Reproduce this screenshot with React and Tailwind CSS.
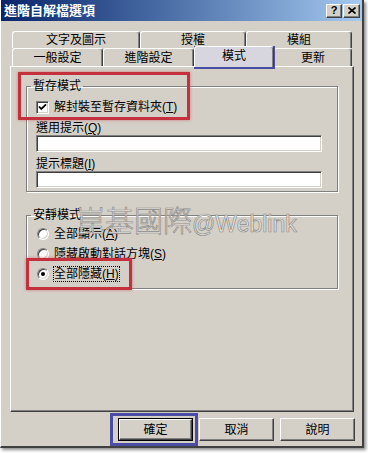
const raised =
  "bg-[#d4d0c8] border border-t-white border-l-white border-r-[#404040] border-b-[#404040] shadow-[inset_-1px_-1px_0_#808080]";
const sunken =
  "bg-white border border-t-[#808080] border-l-[#808080] border-r-white border-b-white shadow-[inset_1px_1px_0_#404040,inset_-1px_-1px_0_#d4d0c8]";

function Tab({ label, w, h, selected }) {
  return (
    <div
      className={`flex items-center justify-center rounded-t-[3px] border-t border-l border-r border-t-white border-l-white border-r-[#404040] shadow-[inset_-1px_0_0_#808080] text-[12px] leading-[14px] text-black ${
        selected ? "relative z-10 -mt-[2px] -mb-[1px] bg-[#d7d6de] pb-[3px]" : "bg-[#d4d0c8]"
      }`}
      style={{ width: w, height: h }}
    >
      {label}
    </div>
  );
}

function Radio({ checked, children, focus }) {
  return (
    <div className="flex items-center gap-[5px] pl-[1px]">
      <div className={`flex h-[12px] w-[12px] items-center justify-center rounded-full ${sunken}`}>
        {checked && <div className="h-[4px] w-[4px] rounded-full bg-black" />}
      </div>
      <span className={`text-[12px] leading-[14px] ${focus ? "outline outline-1 outline-dotted outline-black" : ""}`}>
        {children}
      </span>
    </div>
  );
}

export default function App() {
  return (
    <div className="relative h-[453px] w-[368px] overflow-hidden bg-white font-['Liberation_Sans','Noto_Sans_CJK_TC',sans-serif] text-black">
      <div className="flex h-[448px] w-[364px] flex-col border-l border-r-2 border-b-2 border-l-white border-r-[#404040] border-b-[#404040] bg-[#d4d0c8] shadow-[2px_2px_3px_rgba(0,0,0,0.45)]">
        {/* title bar */}
        <div className="flex h-[21px] items-center justify-between bg-gradient-to-r from-[#0a246a] to-[#a6caf0] pl-[3px] pr-[2px]">
          <span className="text-[13px] font-bold leading-[15px] text-white">進階自解檔選項</span>
          <div className="flex gap-[1px]">
            <div className={`flex h-[14px] w-[16px] items-center justify-center text-[11px] font-bold leading-none ${raised}`}>?</div>
            <div className={`flex h-[14px] w-[17px] items-center justify-center ${raised}`}>
              <svg width="8" height="7" viewBox="0 0 8 7">
                <path d="M0.5 0.5 L7.5 6.5 M7.5 0.5 L0.5 6.5" stroke="black" strokeWidth="1.6" />
              </svg>
            </div>
          </div>
        </div>

        {/* tabs */}
        <div className="ml-[11px] mt-[10px] flex flex-col">
          <div className="flex">
            <Tab label="文字及圖示" w={128} h={17} />
            <Tab label="授權" w={106} h={17} />
            <Tab label="模組" w={106} h={17} />
          </div>
          <div className="flex items-end">
            <Tab label="一般設定" w={91} h={18} />
            <Tab label="進階設定" w={91} h={18} />
            <Tab label="模式" w={80} h={21} selected />
            <Tab label="更新" w={78} h={18} />
          </div>
        </div>

        {/* panel */}
        <div className={`ml-[9px] flex h-[346px] w-[344px] flex-col px-[15px] ${raised}`}>
          <fieldset className="mt-[12px] border border-[#808080] pb-[3px] pl-[9px] pr-[15px] shadow-[inset_1px_1px_0_white,1px_1px_0_white]">
            <legend className="-ml-[5px] px-[2px] text-[12px] leading-[14px]">暫存模式</legend>
            <div className="mt-[7px] flex items-center gap-[5px]">
              <div className={`h-[13px] w-[13px] ${sunken}`}>
                <svg width="11" height="11" viewBox="0 0 11 11">
                  <path d="M2 4.5 L4.3 7 L9 2.3" stroke="black" strokeWidth="1.8" fill="none" />
                </svg>
              </div>
              <span className="text-[12px] leading-[14px]">
                解封裝至暫存資料夾(<u>T</u>)
              </span>
            </div>
            <div className="mt-[7px] text-[12px] leading-[14px]">
              選用提示(<u>Q</u>)
            </div>
            <div className={`h-[17px] w-[286px] ${sunken}`} />
            <div className="mt-[5px] text-[12px] leading-[14px]">
              提示標題(<u>I</u>)
            </div>
            <div className={`h-[17px] w-[286px] ${sunken}`} />
          </fieldset>

          <fieldset className="mt-[16px] border border-[#808080] pb-[7px] pl-[9px] shadow-[inset_1px_1px_0_white,1px_1px_0_white]">
            <legend className="-ml-[5px] px-[2px] text-[12px] leading-[14px]">安靜模式</legend>
            <div className="mt-[5px] flex flex-col gap-[6px]">
              <Radio>
                全部顯示(<u>A</u>)
              </Radio>
              <Radio>
                隱藏啟動對話方塊(<u>S</u>)
              </Radio>
              <Radio checked focus>
                全部隱藏(<u>H</u>)
              </Radio>
            </div>
          </fieldset>
        </div>

        {/* buttons */}
        <div className="mt-[6px] flex justify-end gap-[6px] pr-[7px]">
          <div className="border border-black">
            <div className={`flex h-[21px] w-[73px] items-center justify-center text-[12px] ${raised}`}>確定</div>
          </div>
          <div className={`flex h-[23px] w-[75px] items-center justify-center text-[12px] ${raised}`}>取消</div>
          <div className={`flex h-[23px] w-[75px] items-center justify-center text-[12px] ${raised}`}>說明</div>
        </div>
      </div>

      {/* watermark */}
      <div className="pointer-events-none absolute left-[76px] top-[206px] flex items-baseline text-[#e8e6e2] [-webkit-text-stroke:0.7px_#8e8c88]">
        <span className="text-[29px] font-light leading-[32px]">崑基國際</span>
        <span className="text-[23px] leading-[32px]">@Weblink</span>
      </div>

      {/* annotation boxes */}
      <div className="pointer-events-none absolute left-[194px] top-[46px] h-[23px] w-[81px] border-[3px] border-[#4b4ca5]" />
      <div className="pointer-events-none absolute left-[18px] top-[72px] h-[48px] w-[172px] border-[3px] border-[#c4303c] shadow-[0_0_3px_rgba(200,40,60,0.5)]" />
      <div className="pointer-events-none absolute left-[26px] top-[258px] h-[32px] w-[106px] border-[3px] border-[#c4303c] shadow-[0_0_3px_rgba(200,40,60,0.5)]" />
      <div className="pointer-events-none absolute left-[110px] top-[413px] h-[33px] w-[88px] border-[3px] border-[#4b4ca5]" />
    </div>
  );
}
